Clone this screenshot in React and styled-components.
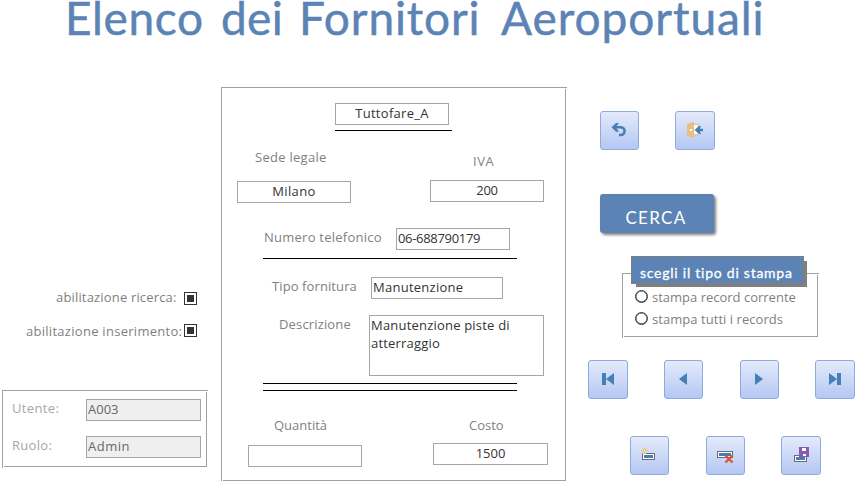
import React from 'react';
import styled, { createGlobalStyle } from 'styled-components';

const Global = createGlobalStyle`
  * { box-sizing: border-box; }
  html, body { margin: 0; background: #fff; overflow: hidden; }
`;

const line = 'linear-gradient(#a0a0a0, #a0a0a0) no-repeat';

const Page = styled.main`
  width: 856px;
  height: 481px;
  display: flex;
  flex-direction: column;
  font: 13px/18px "Open Sans", "Noto Sans", sans-serif;
  color: #7f7f7f;
`;

const Title = styled.h1`
  margin: 0;
  height: 87px;
  padding-left: 65px;
  display: flex;
  flex: none;
  font: 400 46px/36px Lato, sans-serif;
  color: #5b83b5;
  -webkit-text-stroke: 0.5px #5b83b5;
`;

const Word = styled.span`
  flex: none;
  width: ${p => p.$w}px;
  letter-spacing: ${p => p.$ls}px;
  white-space: nowrap;
`;

const Columns = styled.div`
  display: grid;
  grid-template-columns: 221px 346px 289px;
  height: 394px;
`;

const Frame = styled.section`
  flex: none;
  background:
    ${line} left top / 100% 1px,
    ${line} left top / 1px 100%,
    ${line} right 1px top 2px / 1px calc(100% - 3px),
    ${line} left 2px bottom 1px / calc(100% - 3px) 1px;
`;

const Side = styled.aside`
  display: flex;
  flex-direction: column;
  padding-top: 201px;
`;

const CheckRow = styled.label`
  display: flex;
  justify-content: space-between;
  height: 34px;
  margin-left: ${p => p.$ml}px;
  width: ${p => 197 - p.$ml}px;
`;

const Checkbox = styled.span`
  width: 13px;
  height: 13px;
  margin-top: ${p => p.$mt}px;
  border: 1px solid #333;
  background: #333;
  background-clip: content-box;
  padding: 2px;
`;

const UserFrame = styled(Frame)`
  width: 206px;
  height: 78px;
  margin: 34px 0 0 2px;
  padding: 9px 0 0 10px;
  display: flex;
  flex-direction: column;
  gap: 15px;
  color: #a6a6a6;
`;

const Card = styled(Frame)`
  width: 346px;
  height: 395px;
  padding: 16px 0 0 1px;
`;

const Row = styled.div`
  display: flex;
  height: ${p => p.$h || 22}px;
  margin-top: ${p => p.$mt || 0}px;
`;

const Label = styled.span`
  flex: none;
  white-space: nowrap;
  width: ${p => p.$w}px;
  margin: ${p => p.$mt || 0}px 0 0 ${p => p.$ml || 0}px;
  letter-spacing: ${p => p.$ls || 0}px;
`;

const Field = styled.div`
  flex: none;
  width: ${p => p.$w || 114}px;
  height: ${p => p.$h || 22}px;
  margin: ${p => p.$mt || 0}px 0 0 ${p => p.$ml || 0}px;
  border: 1px solid #a6a6a6;
  background: ${p => (p.$off ? '#efefef' : '#fff')};
  color: ${p => (p.$off ? '#686868' : '#333')};
  text-align: ${p => (p.$left ? 'left' : 'center')};
  padding-left: ${p => p.$pl || 0}px;
  letter-spacing: ${p => p.$ls || 0}px;
  white-space: pre-line;
`;

const Rule = styled.div`
  height: 1px;
  background: #000;
  width: ${p => p.$w || 254}px;
  margin: ${p => p.$mt}px 0 0 ${p => p.$ml || 41}px;
`;

const Controls = styled.div`
  display: flex;
  flex-direction: column;
  padding-top: 24px;
`;

const ButtonRow = styled.div`
  display: flex;
  height: 39px;
  gap: 36px;
  margin: ${p => p.$mt || 0}px 0 0 ${p => p.$ml}px;
`;

const IconButton = styled.button`
  flex: none;
  width: ${p => (p.$wide ? 40 : 39)}px;
  height: 39px;
  margin: 0 0 0 ${p => (p.$nudge ? 1 : 0)}px;
  padding: 0;
  border: 1px solid #8faadc;
  border-radius: 3px;
  background: linear-gradient(#e4eafb, #b4c7f3);
  display: flex;
`;

const Glyph = styled.svg`
  display: block;
  flex: none;
  width: 37px;
  height: 37px;
`;

const SearchButton = styled.button`
  flex: none;
  width: 114px;
  height: 39px;
  margin: 44px 0 0 33px;
  padding: 9px 2px 0 0;
  border: 0;
  border-radius: 3px;
  background: #5b83b5;
  box-shadow: 2px 2px 3px rgba(0, 0, 0, 0.5);
  color: #fff;
  font: 17px/30px Lato, sans-serif;
  letter-spacing: 1.3px;
`;

const PrintFrame = styled(Frame)`
  width: 197px;
  height: 65px;
  margin: 40px 0 0 55px;
  display: flex;
  flex-direction: column;
`;

const Tag = styled.div`
  flex: none;
  width: 173px;
  height: 28px;
  margin: -17px 0 4px 9px;
  padding: 3px 0 0 8px;
  border: 1px solid #7f7f7f;
  background: #5b83b5;
  box-shadow: 4px 4px 0 -1px #7f7f7f;
  color: #fff;
  font: 14px/26px Lato, sans-serif;
  letter-spacing: 0.75px;
  -webkit-text-stroke: 0.3px #fff;
  white-space: nowrap;
`;

const RadioRow = styled.label`
  display: flex;
  height: 22px;
  padding-left: 13px;
  gap: 4px;
  white-space: nowrap;
`;

const Radio = styled.span`
  width: 13px;
  height: 13px;
  margin-top: 2px;
  border: 1px solid #2b3a48;
  box-shadow: inset 0 0 0 0.5px #2b3a48;
  border-radius: 50%;
`;

const steel = '#467fb5';

const Svg = ({ children }) => <Glyph viewBox="0 0 37 37">{children}</Glyph>;

const UndoIcon = () => (
  <Svg>
    <path d="M10.5 15.3 15 11h3l-3.3 4.3L18 19.8h-3z" fill={steel} />
    <path d="M13 15.3h7a3.6 3.8 0 0 1 0 7.6h-2" fill="none" stroke={steel} strokeWidth="2.5" />
  </Svg>
);
const ExitIcon = () => (
  <Svg>
    <path d="M17 12.5h5.5v10H17z" fill="#fff" stroke="#e8bf7c" />
    <path d="M11 12l7-2v16l-7-2z" fill="#e8bf7c" />
    <rect x="14" y="17" width="2" height="2" fill="#fff" />
    <path d="M18.5 18l4.5-4h2l-1.2 2.8H27v2.4h-3.2L25 22h-2z" fill={steel} />
  </Svg>
);
const FirstIcon = () => (
  <Svg><path d="M13 12h4v12h-4zM25 12v12l-8-6z" fill={steel} /></Svg>
);
const PrevIcon = () => (
  <Svg><path d="M22 12v12l-8-6z" fill={steel} /></Svg>
);
const NextIcon = () => (
  <Svg><path d="M14 12v12l8-6z" fill={steel} /></Svg>
);
const LastIcon = () => (
  <Svg><path d="M13 12v12l8-6zM21 12h4v12h-4z" fill={steel} /></Svg>
);
const Record = ({ x, y, w = 13 }) => (
  <>
    <rect x={x + 0.5} y={y + 0.5} width={w - 1} height="6" fill="#fff" stroke="#6b6b6b" />
    <rect x={x + 2} y={y + 2} width={w - 4} height="3" fill={steel} />
  </>
);
const AddIcon = () => (
  <Svg>
    <Record x={11} y={16} />
    <circle cx="13.5" cy="13.5" r="3.4" fill="#dfe6fa" />
    <path d="M13.5 10v7M10 13.5h7M11 11l5 5M16 11l-5 5" stroke="#e8bf7c" />
    <circle cx="13.5" cy="13.5" r="1.7" fill="#e8bf7c" />
    <circle cx="13.5" cy="13.5" r="0.7" fill="#fff" />
  </Svg>
);
const DeleteIcon = () => (
  <Svg>
    <Record x={10} y={14} w={16} />
    <path d="M18.5 18.5l7 7M25.5 18.5l-7 7" stroke="#d9532f" strokeWidth="2.3" />
  </Svg>
);
const SaveIcon = () => (
  <Svg>
    <Record x={12} y={18} />
    <rect x="17" y="10" width="10" height="10" fill="#8a5ab0" />
    <rect x="20" y="11" width="4" height="3" fill="#fff" />
    <rect x="21" y="17" width="3" height="2" fill="#fff" />
  </Svg>
);

export default function App() {
  return (
    <Page>
      <Global />
      <Title>
        <Word $w={156} $ls={0.65}>Elenco</Word>
        <Word $w={78} $ls={0.3}>dei</Word>
        <Word $w={202} $ls={0.85}>Fornitori</Word>
        <Word $w={280} $ls={0.95}>Aeroportuali</Word>
      </Title>
      <Columns>
        <Side>
          <CheckRow $ml={56}>
            <Label $ls={0.17}>abilitazione ricerca:</Label>
            <Checkbox $mt={4} />
          </CheckRow>
          <CheckRow $ml={26}>
            <Label $ls={0.28}>abilitazione inserimento:</Label>
            <Checkbox $mt={2} />
          </CheckRow>
          <UserFrame>
            <Row>
              <Label $w={74} $ls={0.35}>Utente:</Label>
              <Field $off $left $w={115} $pl={1}>A003</Field>
            </Row>
            <Row>
              <Label $w={74} $ls={0.3}>Ruolo:</Label>
              <Field $off $left $w={115} $ls={0.5} $pl={1}>Admin</Field>
            </Row>
          </UserFrame>
        </Side>
        <Card>
          <Row>
            <Field $ml={113} $ls={0.29}>Tuttofare_A</Field>
          </Row>
          <Rule $mt={5} $ml={113} $w={117} />
          <Row $mt={17}>
            <Label $ml={33} $w={100} $ls={0.28}>Sede legale</Label>
            <Label $ml={118} $mt={4} $ls={0.6}>IVA</Label>
          </Row>
          <Row $mt={10} $h={23}>
            <Field $ml={15} $mt={1} $ls={0.4}>Milano</Field>
            <Field $ml={79} $ls={-0.3}>200</Field>
          </Row>
          <Row $mt={25}>
            <Label $ml={42} $w={123} $ls={0.25}>Numero telefonico</Label>
            <Field $ml={9} $left $pl={1} $ls={-0.32}>06-688790179</Field>
          </Row>
          <Rule $mt={8} />
          <Row $mt={18}>
            <Label $ml={50} $w={90} $ls={0.1}>Tipo fornitura</Label>
            <Field $ml={9} $w={132} $left $pl={1} $ls={0.26}>Manutenzione</Field>
          </Row>
          <Row $mt={16} $h={61}>
            <Label $ml={57} $w={81} $ls={0.15}>Descrizione</Label>
            <Field $ml={9} $w={175} $h={61} $left $pl={1} $ls={0.2}>{'Manutenzione piste di\natterraggio'}</Field>
          </Row>
          <Rule $mt={7} />
          <Rule $mt={6} />
          <Row $mt={25} $h={18}>
            <Label $ml={52} $w={100}>Quantità</Label>
            <Label $ml={95}>Costo</Label>
          </Row>
          <Row $mt={9} $h={24}>
            <Field $ml={26} $mt={2} />
            <Field $ml={71} $w={115}>1500</Field>
          </Row>
        </Card>
        <Controls>
          <ButtonRow $ml={33}>
            <IconButton><UndoIcon /></IconButton>
            <IconButton $wide><ExitIcon /></IconButton>
          </ButtonRow>
          <SearchButton>CERCA</SearchButton>
          <PrintFrame>
            <Tag>scegli il tipo di stampa</Tag>
            <RadioRow>
              <Radio />
              <Label>stampa record corrente</Label>
            </RadioRow>
            <RadioRow>
              <Radio />
              <Label $ls={0.05}>stampa tutti i records</Label>
            </RadioRow>
          </PrintFrame>
          <ButtonRow $ml={21} $mt={22}>
            <IconButton $wide><FirstIcon /></IconButton>
            <IconButton><PrevIcon /></IconButton>
            <IconButton $nudge><NextIcon /></IconButton>
            <IconButton $wide><LastIcon /></IconButton>
          </ButtonRow>
          <ButtonRow $ml={63} $mt={37}>
            <IconButton><AddIcon /></IconButton>
            <IconButton $nudge><DeleteIcon /></IconButton>
            <IconButton $wide><SaveIcon /></IconButton>
          </ButtonRow>
        </Controls>
      </Columns>
    </Page>
  );
}
